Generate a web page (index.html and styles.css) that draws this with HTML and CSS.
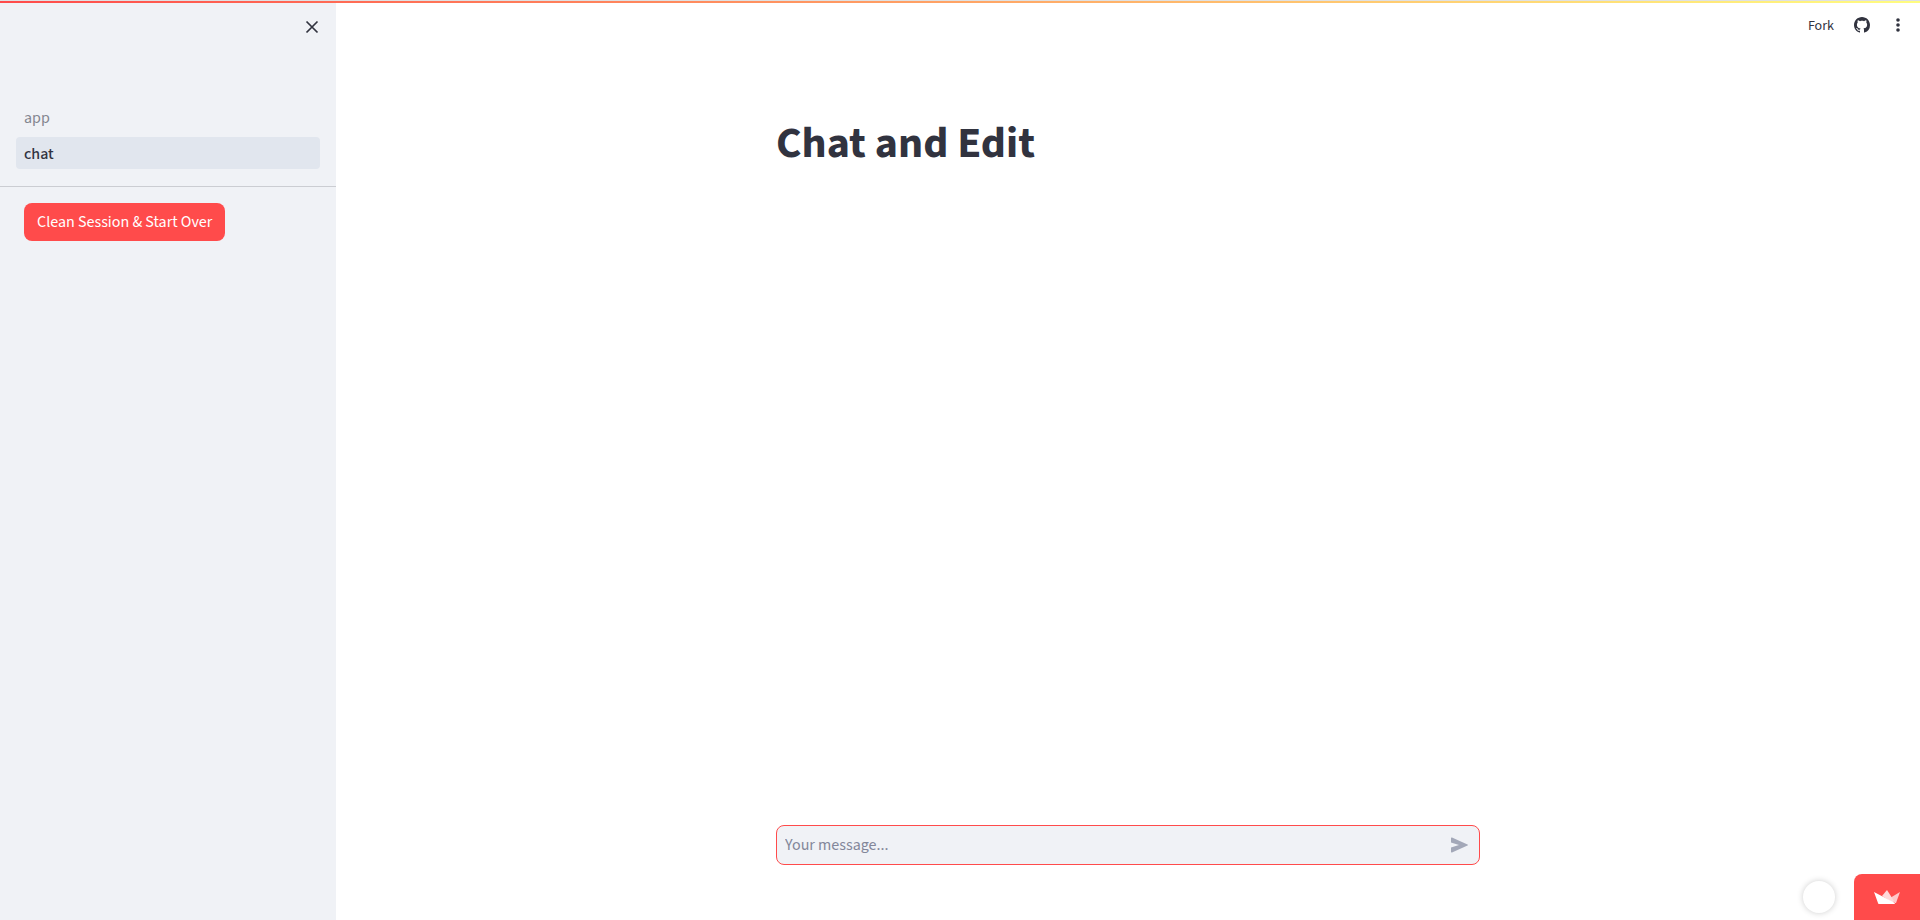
FILE: index.html
```html
<!DOCTYPE html>
<html lang="en">
<head>
<meta charset="utf-8">
<title>Chat and Edit</title>
<link rel="stylesheet" href="styles.css">
</head>
<body>
<div class="decoration"></div>
<div class="app">
  <aside class="sidebar">
    <div class="sidebar-header">
      <button class="icon-button" type="button" aria-label="Close sidebar">
        <svg width="20" height="20" viewBox="0 0 20 20"><path d="M4.5 4.5l11 11M15.500 4.500l-11 11" fill="none" stroke="currentColor" stroke-width="1.700"/></svg>
      </button>
    </div>
    <nav class="nav">
      <a class="nav-link" href="#app">app</a>
      <a class="nav-link nav-link-active" href="#chat" aria-current="page">chat</a>
    </nav>
    <div class="sidebar-content">
      <button class="primary-button" type="button">Clean Session &amp; Start Over</button>
    </div>
  </aside>
  <div class="page">
    <header class="toolbar">
      <button class="fork-button" type="button">Fork</button>
      <a class="toolbar-icon" href="#github" aria-label="View on GitHub">
        <svg width="16" height="16" viewBox="0 0 16 16" fill="currentColor"><path d="M8 0C3.580 0 0 3.580 0 8c0 3.540 2.290 6.530 5.470 7.590.4.070.55-.17.55-.38 0-.19-.01-.82-.01-1.490-2.010.37-2.530-.49-2.690-.94-.09-.23-.48-.94-.82-1.130-.28-.15-.68-.52-.01-.53.63-.01 1.080.58 1.230.82.72 1.210 1.870.87 2.330.66.070-.52.28-.87.51-1.070-1.780-.2-3.640-.89-3.640-3.950 0-.87.31-1.590.82-2.150-.08-.2-.36-1.020.08-2.120 0 0 .67-.21 2.200.82.64-.18 1.320-.27 2-.27s1.360.09 2 .27c1.530-1.040 2.200-.82 2.200-.82.44 1.100.16 1.920.08 2.120.51.56.82 1.270.82 2.150 0 3.070-1.870 3.750-3.650 3.950.29.25.54.73.54 1.480 0 1.070-.01 1.930-.01 2.200 0 .21.15.46.55.38A8.010 8.010 0 0 0 16 8c0-4.420-3.580-8-8-8z"/></svg>
      </a>
      <button class="toolbar-icon" type="button" aria-label="Main menu">
        <svg width="20" height="20" viewBox="0 0 20 20" fill="currentColor"><circle cx="10" cy="5" r="1.800"/><circle cx="10" cy="10" r="1.800"/><circle cx="10" cy="15" r="1.800"/></svg>
      </button>
    </header>
    <main class="main">
      <h1 class="title">Chat and Edit</h1>
    </main>
    <form class="chat">
      <div class="chat-box">
        <input class="chat-input" type="text" aria-label="Your message" placeholder="Your message...">
        <button class="send-button" type="button" aria-label="Send message">
          <svg width="17" height="16" viewBox="0 0 17 16" fill="currentColor"><path d="M0 1.300Q0 .2 1 .6L16.500 7.400Q17.500 8 16.500 8.600L1 15.400Q0 15.800 0 14.700V10.500L8 8L0 5.500z"/></svg>
        </button>
      </div>
    </form>
  </div>
</div>
<div class="badges">
  <a class="avatar" href="#profile" aria-label="Creator profile"></a>
  <a class="hosted" href="#hosted" aria-label="Hosted with Streamlit">
    <svg width="26" height="14" viewBox="0 0 26 14"><path fill="#ffc8ca" d="M26 2L16 8L21 13L22 13z"/><path fill="#ffd9db" d="M8 6L13 0L20 11L19 13z"/><path fill="#fff" d="M0 2L21 13Q21 14 20 14H5Q4 14 4 13z"/></svg>
  </a>
</div>
</body>
</html>
```
FILE: styles.css
```css
* { box-sizing: border-box; }

body {
  margin: 0;
  background: #fff;
  color: #31333f;
  font-family: "Source Sans 3", "Source Sans Pro", "Noto Sans CJK SC", sans-serif;
  font-size: 16px;
  line-height: 24px;
}

a { color: inherit; text-decoration: none; }

button {
  padding: 0;
  border: 0;
  background: none;
  color: inherit;
  font: inherit;
  cursor: pointer;
}

svg { display: block; }

.decoration {
  position: fixed;
  inset: 0 0 auto;
  z-index: 2;
  height: 3px;
  border-top: 1px solid #dfe1e3;
  background: linear-gradient(90deg, #ff4b4b, #fffd80);
}

.app { display: flex; min-height: 100vh; }

.sidebar { flex: 0 0 336px; background: #f0f2f6; }

.sidebar-header {
  display: flex;
  justify-content: flex-end;
  padding: 17px 14px 0;
  height: 101px;
}

.icon-button { width: 20px; height: 20px; }

.nav {
  display: flex;
  flex-direction: column;
  gap: 4px;
  padding: 0 16px 17px;
  border-bottom: 1px solid #cbcdd2;
}

.nav-link {
  padding: 5px 8px 3px;
  border-radius: 4px;
  color: #83858f;
}

.nav-link-active {
  background: #e1e6ee;
  color: #31333f;
  font-weight: 500;
}

.sidebar-content { padding: 16px 24px; }

.primary-button {
  padding: 7px 13px;
  border-radius: 8px;
  background: #ff4b4b;
  color: #fff;
}

.page { display: flex; flex: 1; flex-direction: column; }

.toolbar {
  display: flex;
  align-items: center;
  justify-content: flex-end;
  gap: 18px;
  height: 50px;
  padding: 0 12px;
}

.fork-button {
  margin-right: 2px;
  padding-top: 2px;
  font-size: 14px;
}

.main {
  flex: 1;
  width: 100%;
  max-width: 736px;
  margin: 0 auto;
  padding: 67px 16px;
}

.title {
  margin: 0;
  font-size: 44px;
  font-weight: 700;
  line-height: 53px;
}

.chat {
  width: 100%;
  max-width: 736px;
  margin: 0 auto;
  padding: 0 16px 55px;
}

.chat-box {
  display: flex;
  align-items: center;
  height: 40px;
  padding: 0 11px 0 8px;
  border: 1px solid #ff4b4b;
  border-radius: 8px;
  background: #f0f2f6;
}

.chat-input {
  flex: 1;
  min-width: 0;
  padding: 0;
  border: 0;
  outline: 0;
  background: none;
  color: inherit;
  font: inherit;
}

.chat-input::placeholder { color: #83879a; opacity: 1; }

.send-button { color: #a3a8b8; }

.badges {
  position: fixed;
  right: 0;
  bottom: 0;
  display: flex;
  align-items: center;
  gap: 19px;
}

.avatar {
  width: 32px;
  height: 32px;
  border-radius: 50%;
  background: #fff;
  box-shadow: 0 0 6px rgba(0, 0, 0, 0.2);
}

.hosted {
  padding: 16px 20px;
  border-top-left-radius: 8px;
  background: #ff4b4b;
}
```
